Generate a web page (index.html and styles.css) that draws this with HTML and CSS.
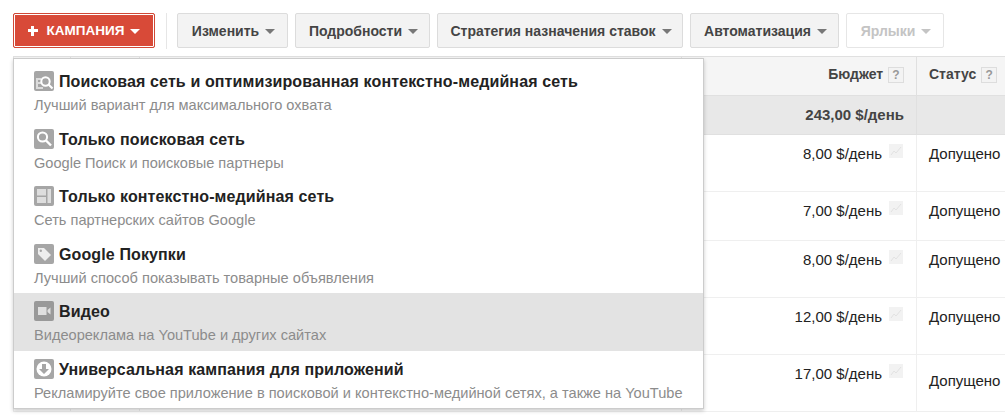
FILE: index.html
```html
<!DOCTYPE html>
<html lang="ru">
<head>
    <meta charset="UTF-8">
    <title>Кампании</title>
    <link rel="stylesheet" href="styles.css">
</head>
<body>
    <div class="toolbar">
        <button class="btn btn-red"><span class="plus"></span>КАМПАНИЯ<span class="caret"></span></button>
        <div class="sep"></div>
        <div class="btn-group">
            <button class="btn w-edit">Изменить<span class="caret"></span></button>
            <button class="btn w-details">Подробности<span class="caret"></span></button>
            <button class="btn w-bid">Стратегия назначения ставок<span class="caret"></span></button>
            <button class="btn w-auto">Автоматизация<span class="caret"></span></button>
            <button class="btn btn-off w-labels">Ярлыки<span class="caret"></span></button>
        </div>
    </div>

    <table class="grid">
        <colgroup>
            <col class="c1"><col class="c2"><col class="c3"><col class="c4"><col class="c5">
        </colgroup>
        <tr class="head">
            <td></td><td></td><td></td>
            <td class="num">Бюджет <span class="help">?</span></td>
            <td>Статус <span class="help">?</span></td>
        </tr>
        <tr class="total">
            <td></td><td></td><td></td>
            <td class="num">243,00 $/день</td>
            <td></td>
        </tr>
        <tr class="row">
            <td></td><td></td><td></td>
            <td class="num">8,00 $/день<span class="chart"><svg viewBox="0 0 14 14"><path d="M2 11l3-4 2 2 5-6" fill="none" stroke="#e2e2e2"/></svg></span></td>
            <td>Допущено</td>
        </tr>
        <tr class="row short">
            <td></td><td></td><td></td>
            <td class="num">7,00 $/день<span class="chart"><svg viewBox="0 0 14 14"><path d="M2 11l3-4 2 2 5-6" fill="none" stroke="#e2e2e2"/></svg></span></td>
            <td>Допущено</td>
        </tr>
        <tr class="row">
            <td></td><td></td><td></td>
            <td class="num">8,00 $/день<span class="chart"><svg viewBox="0 0 14 14"><path d="M2 11l3-4 2 2 5-6" fill="none" stroke="#e2e2e2"/></svg></span></td>
            <td>Допущено</td>
        </tr>
        <tr class="row">
            <td></td><td></td><td></td>
            <td class="num">12,00 $/день<span class="chart"><svg viewBox="0 0 14 14"><path d="M2 11l3-4 2 2 5-6" fill="none" stroke="#e2e2e2"/></svg></span></td>
            <td>Допущено</td>
        </tr>
        <tr class="row">
            <td></td><td></td><td></td>
            <td class="num">17,00 $/день<span class="chart"><svg viewBox="0 0 14 14"><path d="M2 11l3-4 2 2 5-6" fill="none" stroke="#e2e2e2"/></svg></span></td>
            <td class="low">Допущено</td>
        </tr>
    </table>

    <div class="menu">
        <div class="item">
            <div class="title">
                <svg class="ico" viewBox="0 0 20 20"><rect width="20" height="20" rx="2" fill="#a6a6a6"/><path d="M2 7h5v2H4v2h3v2H4v3h5v2H2z" fill="#dcdcdc"/><circle cx="11.5" cy="10.500" r="4.200" fill="none" stroke="#fff" stroke-width="2"/><path d="M14.500 13.500l4 4" stroke="#fff" stroke-width="2.200"/></svg>
                Поисковая сеть и оптимизированная контекстно-медийная сеть
            </div>
            <div class="sub">Лучший вариант для максимального охвата</div>
        </div>
        <div class="item">
            <div class="title">
                <svg class="ico" viewBox="0 0 20 20"><rect width="20" height="20" rx="2" fill="#a6a6a6"/><circle cx="8.500" cy="8" r="4.600" fill="none" stroke="#fff" stroke-width="2"/><path d="M12 11.500l5 5" stroke="#fff" stroke-width="2.400"/></svg>
                Только поисковая сеть
            </div>
            <div class="sub">Google Поиск и поисковые партнеры</div>
        </div>
        <div class="item">
            <div class="title">
                <svg class="ico" viewBox="0 0 20 20"><rect width="20" height="20" rx="2" fill="#a6a6a6"/><path d="M3 3h9v6.500H3zM3 11h9v6H3zM13.500 3H17v14h-3.500z" fill="#dedede"/></svg>
                Только контекстно-медийная сеть
            </div>
            <div class="sub">Сеть партнерских сайтов Google</div>
        </div>
        <div class="item">
            <div class="title">
                <svg class="ico" viewBox="0 0 20 20"><rect width="20" height="20" rx="2" fill="#a6a6a6"/><path d="M4 4h6l7 7-6 6-7-7z" fill="#eee"/><circle cx="6.800" cy="6.800" r="1.200" fill="#a6a6a6"/></svg>
                Google Покупки
            </div>
            <div class="sub">Лучший способ показывать товарные объявления</div>
        </div>
        <div class="item active">
            <div class="title">
                <svg class="ico" viewBox="0 0 20 20"><rect width="20" height="20" rx="2" fill="#999"/><path d="M4 6h8.500v8H4zM13.500 9l3-2.500v7l-3-2.500z" fill="#e0e0e0"/></svg>
                Видео
            </div>
            <div class="sub">Видеореклама на YouTube и других сайтах</div>
        </div>
        <div class="item">
            <div class="title">
                <svg class="ico" viewBox="0 0 20 20"><rect width="20" height="20" rx="2" fill="#a6a6a6"/><circle cx="10" cy="10" r="7.500" fill="#fff"/><path d="M8 5h4v5h3l-5 5-5-5h3z" fill="#a6a6a6"/></svg>
                Универсальная кампания для приложений
            </div>
            <div class="sub">Рекламируйте свое приложение в поисковой и контекстно-медийной сетях, а также на YouTube</div>
        </div>
    </div>
</body>
</html>
```

FILE: styles.css
```css
*{
    box-sizing: border-box;
}
html,body{
    height: 100%;
}
body{
    margin: 0;
    padding: 13px 0 0 13px;
    position: relative;
    overflow: hidden;
    background-color: #fff;
    font-family: "Liberation Sans", Arial, sans-serif;
    font-size: 14px;
    color: #222;
}
.toolbar{
    display: flex;
    align-items: center;
    height: 35px;
}
.btn{
    display: flex;
    align-items: center;
    justify-content: center;
    height: 35px;
    padding: 0 0 0 2px;
    border: 1px solid #dcdcdc;
    border-radius: 2px;
    background-color: #f3f3f3;
    color: #444;
    font-family: inherit;
    font-size: 14px;
    font-weight: bold;
}
.btn-red{
    width: 142px;
    padding: 0;
    border: 1px solid #d14836;
    outline: 1px solid #fff;
    outline-offset: -2px;
    background-color: #d84a38;
    color: #fff;
    font-size: 13.500px;
}
.btn-off{
    background-color: #fff;
    border-color: #e6e6e6;
    color: #c4c4c4;
}
.btn-group{
    display: flex;
    gap: 7px;
}
.w-edit{ width: 111px; }
.w-details{ width: 135px; }
.w-bid{ width: 246px; }
.w-auto{ width: 149px; }
.w-labels{ width: 98px; }
.sep{
    width: 1px;
    height: 36px;
    margin: 0 10px 0 11px;
    background-color: #e6e6e6;
}
.plus{
    position: relative;
    width: 10px;
    height: 10px;
    margin-right: 9px;
    background:
        linear-gradient(#fff, #fff) center / 10px 3px no-repeat,
        linear-gradient(#fff, #fff) center / 3px 10px no-repeat;
}
.caret{
    width: 0;
    height: 0;
    margin-left: 6px;
    margin-top: 1px;
    border-top: 5px solid #777;
    border-left: 5px solid transparent;
    border-right: 5px solid transparent;
}
.btn-red .caret{
    border-top-color: #fff;
}
.btn-off .caret{
    border-top-color: #c4c4c4;
}

.grid{
    width: 1000px;
    margin-top: 8px;
    border-collapse: collapse;
    table-layout: fixed;
}
.c1{ width: 57px; }
.c2{ width: 69px; }
.c3{ width: 542px; }
.c4{ width: 235px; }
.c5{ width: 97px; }
.grid td{
    padding: 0 0 0 12px;
    border: 1px solid #efefef;
    vertical-align: top;
    white-space: nowrap;
}
.grid td.num{
    padding: 0 12px 0 0;
    text-align: right;
}
.head td{
    height: 39px;
    border-color: #e0e0e0;
    background-color: #f5f5f5;
    color: #444;
    font-weight: bold;
}
.grid .head td{
    padding-top: 9px;
}
.total td{
    height: 39px;
    border-color: #e0e0e0;
    background-color: #e8e8e8;
    color: #444;
    font-size: 15px;
    font-weight: bold;
}
.grid .total td{
    padding-top: 10px;
}
.row td{
    height: 57px;
    color: #222;
    font-size: 15px;
}
.grid .row td{
    padding-top: 10px;
}
.grid .row td.num{
    padding-right: 13px;
}
.row.short td{
    height: 49px;
}
.grid .row td.low{
    padding-top: 17px;
}
.help{
    display: inline-block;
    width: 16px;
    height: 16px;
    margin-left: 1px;
    border: 1px solid #ddd;
    background-color: #f3f3f3;
    color: #999;
    font-size: 12px;
    font-weight: bold;
    line-height: 14px;
    text-align: center;
    vertical-align: middle;
}
.chart{
    display: inline-block;
    width: 14px;
    height: 14px;
    margin-top: -1px;
    margin-left: 7px;
    background-color: #f2f2f2;
    vertical-align: 1px;
}
.chart svg{
    display: block;
}

.menu{
    position: absolute;
    left: 13px;
    top: 58px;
    width: 691px;
    height: 351px;
    padding-top: 4px;
    border: 1px solid #ccc;
    background-color: #fff;
    box-shadow: 0 2px 4px rgba(0, 0, 0, .2);
}
.item{
    height: 57.500px;
    padding: 8px 0 0 20px;
}
.item.active{
    background-color: #e3e3e3;
}
.title{
    display: flex;
    align-items: flex-start;
    gap: 5px;
    height: 20px;
    font-size: 16px;
    font-weight: bold;
    line-height: 22px;
    letter-spacing: .12px;
    color: #222;
}
.ico{
    width: 20px;
    height: 20px;
    flex-shrink: 0;
}
.sub{
    margin-top: 6px;
    font-size: 14.600px;
    line-height: 16px;
    color: #8c8c8c;
    white-space: nowrap;
}
```
